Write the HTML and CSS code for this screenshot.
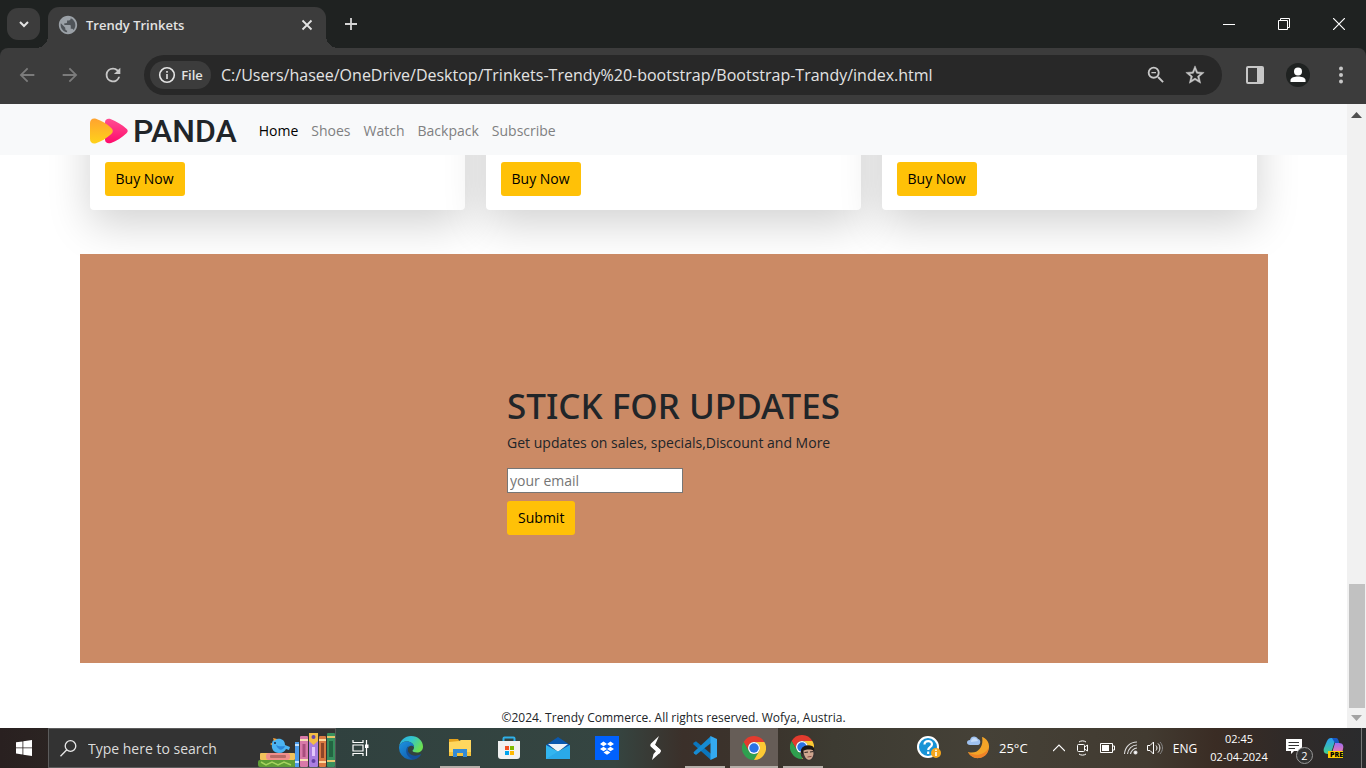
FILE: index.html
```html
<!DOCTYPE html>
<html lang="en">
<head>
<meta charset="utf-8">
<title>Trendy Trinkets</title>
<link rel="stylesheet" href="styles.css">
</head>
<body>
<header class="tabstrip">
  <button class="tab-search" aria-label="Search tabs"><svg width="12" height="12" viewBox="0 0 12 12"><path d="M2 4l4 4 4-4" fill="none" stroke="#e3e3e3" stroke-width="2"/></svg></button>
  <div class="tab">
    <svg width="22" height="22" viewBox="0 0 24 24"><circle cx="12" cy="12" r="9" fill="#4f5459"/><path fill="#9aa0a6" d="M12 2C6.480 2 2 6.480 2 12s4.480 10 10 10 10-4.480 10-10S17.520 2 12 2zm-1 17.930c-3.950-.490-7-3.850-7-7.930 0-.620.080-1.210.210-1.790L9 15v1c0 1.100.900 2 2 2v1.930zm6.900-2.540c-.260-.810-1-1.390-1.900-1.390h-1v-3c0-.550-.450-1-1-1H8v-2h2c.550 0 1-.450 1-1V7h2c1.100 0 2-.900 2-2v-.410c2.930 1.190 5 4.060 5 7.410 0 2.080-.800 3.970-2.100 5.390z"/></svg>
    <span class="tab-title">Trendy Trinkets</span>
    <button class="tab-close" aria-label="Close tab"><svg width="12" height="12" viewBox="0 0 12 12"><path d="M1.500 1.500l9 9m0-9l-9 9" stroke="#e3e3e3" stroke-width="1.800"/></svg></button>
  </div>
  <button class="new-tab" aria-label="New tab"><svg width="14" height="14" viewBox="0 0 14 14"><path d="M7 1v12M1 7h12" stroke="#d5d5d5" stroke-width="1.800"/></svg></button>
  <div class="window-controls">
    <button aria-label="Minimize"><svg width="12" height="12" viewBox="0 0 12 12"><path d="M0 6.500h12" stroke="#fff"/></svg></button>
    <button aria-label="Restore"><svg width="12" height="12" viewBox="0 0 12 12" fill="none" stroke="#fff"><path d="M.5 2.500h9v9h-9zM2.500 2.500v-2h9v9h-2"/></svg></button>
    <button aria-label="Close"><svg width="12" height="12" viewBox="0 0 12 12"><path d="M0 0l12 12M12 0L0 12" stroke="#fff" stroke-width="1.200"/></svg></button>
  </div>
</header>

<div class="toolbar">
  <div class="nav-buttons">
    <button aria-label="Back"><svg width="22" height="22" viewBox="0 0 24 24"><path fill="#7b7b7b" d="M20 11H7.830l5.590-5.590L12 4l-8 8 8 8 1.410-1.410L7.830 13H20v-2z"/></svg></button>
    <button aria-label="Forward"><svg width="22" height="22" viewBox="0 0 24 24"><path fill="#7b7b7b" d="M12 4l-1.410 1.410L16.170 11H4v2h12.170l-5.580 5.590L12 20l8-8z"/></svg></button>
    <button aria-label="Reload"><svg width="22" height="22" viewBox="0 0 24 24"><path fill="#c7c7c7" d="M17.650 6.350A7.960 7.960 0 0 0 12 4a8 8 0 1 0 7.730 10h-2.080A6 6 0 1 1 12 6c1.660 0 3.140.690 4.220 1.780L13 11h7V4l-2.350 2.350z"/></svg></button>
  </div>
  <div class="omnibox">
    <button class="file-chip"><svg width="18" height="18" viewBox="0 0 18 18"><circle cx="9" cy="9" r="7.300" fill="none" stroke="#e3e3e3" stroke-width="1.600"/><path d="M9 8v5M9 5v1.800" stroke="#e3e3e3" stroke-width="1.600"/></svg>File</button>
    <input class="url" aria-label="Address" value="C:/Users/hasee/OneDrive/Desktop/Trinkets-Trendy%20-bootstrap/Bootstrap-Trandy/index.html">
    <button class="omni-action" aria-label="Zoom"><svg width="22" height="22" viewBox="0 0 24 24"><path fill="#c7c7c7" d="M15.500 14h-.790l-.280-.270A6.470 6.470 0 0 0 16 9.500 6.500 6.500 0 1 0 9.500 16c1.610 0 3.090-.590 4.230-1.570l.270.280v.790l5 4.990L20.490 19l-4.990-5zm-6 0C7.010 14 5 11.990 5 9.500S7.010 5 9.500 5 14 7.010 14 9.500 11.990 14 9.500 14zM7 8.800h5v1.400H7z"/></svg></button>
    <button class="omni-action" aria-label="Bookmark"><svg width="22" height="22" viewBox="0 0 24 24"><path fill="#c7c7c7" stroke="#c7c7c7" stroke-width=".5" d="M22 9.240l-7.190-.620L12 2 9.190 8.630 2 9.240l5.460 4.730L5.820 21 12 17.270 18.180 21l-1.630-7.030L22 9.240zM12 15.400l-3.760 2.270 1-4.280-3.320-2.880 4.380-.380L12 6.100l1.710 4.040 4.380.380-3.320 2.880 1 4.280L12 15.400z"/></svg></button>
  </div>
  <div class="toolbar-actions">
    <button aria-label="Side panel"><svg width="18" height="18" viewBox="0 0 18 18"><path fill="#c7c7c7" fill-rule="evenodd" d="M2 0h14a2 2 0 0 1 2 2v14a2 2 0 0 1-2 2H2a2 2 0 0 1-2-2V2a2 2 0 0 1 2-2zm0 2v14h9V2z"/></svg></button>
    <button aria-label="Profile"><svg width="24" height="24" viewBox="0 0 24 24"><circle cx="12" cy="12" r="12" fill="#1f2221"/><circle cx="12" cy="8.500" r="4" fill="#fff"/><path fill="#fff" d="M4.500 19v-2c0-2.500 4.500-3.500 7.500-3.500s7.500 1 7.500 3.500v2z"/></svg></button>
    <button aria-label="Menu"><svg width="6" height="18" viewBox="0 0 6 18" fill="#c7c7c7"><circle cx="3" cy="2.500" r="2"/><circle cx="3" cy="9" r="2"/><circle cx="3" cy="15.500" r="2"/></svg></button>
  </div>
</div>

<div class="viewport">
  <main class="page">
    <nav class="navbar">
      <a class="brand" href="#home">
        <svg width="38" height="26" viewBox="0 0 38 26">
          <defs>
            <linearGradient id="orange" x1="0" y1="0" x2="0" y2="1"><stop offset="0" stop-color="#ffa32f"/><stop offset="1" stop-color="#ffd21a"/></linearGradient>
            <linearGradient id="pink" x1="0" y1="0" x2="0" y2="1"><stop offset="0" stop-color="#ff4f93"/><stop offset="1" stop-color="#ff0a6c"/></linearGradient>
          </defs>
          <path fill="url(#pink)" d="M15 4.500C15 1 18 .100 21 1.200c5 1.800 11 5.500 15.500 9.600 1.600 1.500 1.600 3 0 4.400C32 19.500 26.500 23 21 24.900c-3 1-6 0-6-3.400z"/>
          <path fill="url(#orange)" d="M0 5C0 1.500 2.800-.300 6 .800 11.500 2.800 17 6 21.300 10c2 1.900 2 4 0 6C17 20 11.500 23.300 6 25.200c-3.200 1.100-6-.700-6-4.200z"/>
        </svg>
        <span>PANDA</span>
      </a>
      <a class="nav-link active" href="#home">Home</a>
      <a class="nav-link" href="#shoes">Shoes</a>
      <a class="nav-link" href="#watch">Watch</a>
      <a class="nav-link" href="#backpack">Backpack</a>
      <a class="nav-link" href="#subscribe">Subscribe</a>
    </nav>
    <section class="container products">
      <article class="card"><button class="btn">Buy Now</button></article>
      <article class="card"><button class="btn">Buy Now</button></article>
      <article class="card"><button class="btn">Buy Now</button></article>
    </section>
    <section class="container subscribe" id="subscribe">
      <form class="subscribe-form">
        <h1>STICK FOR UPDATES</h1>
        <p>Get updates on sales, specials,Discount and More</p>
        <input type="email" placeholder="your email" aria-label="your email">
        <button class="btn" type="button">Submit</button>
      </form>
    </section>
    <footer class="footer">©2024. Trendy Commerce. All rights reserved. Wofya, Austria.</footer>
  </main>
  <div class="scrollbar">
    <svg width="11" height="6" viewBox="0 0 11 6"><path d="M5.500 0L11 6H0z" fill="#505050"/></svg>
    <div class="thumb"></div>
    <svg width="11" height="6" viewBox="0 0 11 6"><path d="M5.500 6L0 0h11z" fill="#a3a3a3"/></svg>
  </div>
</div>

<footer class="taskbar">
  <button class="start" aria-label="Start"><svg width="16" height="16" viewBox="0 0 16 16" fill="#fff"><path d="M0 2.300l6.500-.9v6.100H0zM7.300 1.300L16 0v7.500H7.300zM0 8.300h6.500v6.200L0 13.600zM7.300 8.300H16V16l-8.700-1.300z"/></svg></button>
  <label class="search">
    <svg width="17" height="17" viewBox="0 0 17 17" fill="none" stroke="#e8e8e8" stroke-width="1.300"><circle cx="10.500" cy="6" r="5.300"/><path d="M6.800 9.800L.5 16.300"/></svg>
    <input type="text" placeholder="Type here to search">
    <svg width="77" height="34" viewBox="0 0 77 34">
      <rect x="0" y="27" width="38" height="7" rx="2" fill="#5e9d35"/><path d="M3 29l5 3 6-3 6 3 6-3 7 3" stroke="#a5d35f" stroke-width="1.500" fill="none"/>
      <rect x="2" y="20" width="35" height="7" rx="1" fill="#f2c25a"/><rect x="8" y="20" width="24" height="7" rx="3" fill="#f08f8b"/><rect x="12" y="22" width="16" height="3" rx="1" fill="#b96a65"/>
      <path d="M14 11c-1 5 2 9 7 9 4 0 6-2 7-4l3 1 1-3-5-2c0-5-4-7-8-6-3 0-5 2-5 5z" fill="#4bb4f2"/><path d="M18 12c3 2 6 1 9 1-1 4-6 6-9-1z" fill="#2b86d8"/><path d="M14 10l-2 1 2 1M15 5l1 3 3-2z" fill="#f6a23c"/><circle cx="17" cy="10" r="1" fill="#124"/>
      <rect x="37" y="9" width="4" height="25" fill="#4b9bea"/><path d="M37 12h4M37 29h4" stroke="#c2e2ff" stroke-width="2"/>
      <rect x="42" y="3" width="8" height="31" rx="1" fill="#d879a8"/><path d="M42 7h8M42 27h8" stroke="#f7dfb5" stroke-width="2"/><path d="M46 11v13" stroke="#a94e7e" stroke-width="3"/>
      <rect x="51" y="0" width="9" height="34" rx="1" fill="#aa7ee0"/><path d="M51 0h9v8l-4.500 4L51 8z" fill="#f3bd45"/><circle cx="55.500" cy="4" r="2" fill="#6949aa"/><path d="M55.500 14v9" stroke="#e3c7fa" stroke-width="3"/><circle cx="55.500" cy="28" r="2" fill="#6440a4"/>
      <rect x="61" y="3" width="7" height="31" rx="1" fill="#d97a42"/><path d="M61 7h7M61 29h7" stroke="#ffd79a" stroke-width="2"/><path d="M64.500 10v15" stroke="#8d4629" stroke-width="3"/>
      <rect x="69" y="0" width="8" height="34" rx="1" fill="#388f5d"/><path d="M69 4h8M69 28h8" stroke="#e4c46b" stroke-width="2"/><path d="M73 8v16" stroke="#236442" stroke-width="4"/>
    </svg>
  </label>
  <div class="apps">
    <button class="app task-view" aria-label="Task view"><svg width="17" height="16" viewBox="0 0 17 16" fill="none" stroke="#fff" stroke-width="1.200"><path d="M1 5h10v6H1zM1 0v2.500h10V0M1 16v-2.500h10V16M14.500 0v16"/><path fill="#fff" stroke="none" d="M13 4.500h3.500v3.500H13z"/></svg></button>
    <button class="app" aria-label="Edge"><svg width="24" height="24" viewBox="0 0 24 24">
      <defs><linearGradient id="edgeTop" x1="0" y1="0" x2="1" y2=".5"><stop offset="0" stop-color="#2aa9e0"/><stop offset=".5" stop-color="#32c5cf"/><stop offset="1" stop-color="#6be052"/></linearGradient><linearGradient id="edgeLow" x1="0" y1="0" x2="1" y2="1"><stop offset="0" stop-color="#1c93e0"/><stop offset="1" stop-color="#0f4fa0"/></linearGradient></defs>
      <path fill="url(#edgeTop)" d="M0 11C1 4 6 0 12 0c7 0 12 5 12 10.500 0 4-3 6-6 6-2.500 0-4.500-.7-4.500-1.700 0-1 1.500-1 1.500-3.300C15 8 12 5.500 8 5.500c-4 0-7 2-8 5.500z"/>
      <path fill="url(#edgeLow)" d="M0 12C0 8 3.500 5.500 8 5.500c4 0 7 2.500 7 5.500-1.500-2-6-2-6.500 2.500-.4 4.500 4 7.500 9 6.500 2-.4 3-1 4.700-2A12 12 0 0 1 0 12z"/>
      <path fill="#144f98" d="M10.500 9.200C6.500 11 6 17.500 10 21c1.500 1.400 3.500 2.200 5.500 2.600 3-.8 5.300-2.800 6.700-5.300-6.500 3.200-13 .5-13.500-4.300-.2-2 .5-4 1.800-4.800z"/>
    </svg></button>
    <button class="app open" aria-label="File Explorer"><svg width="22" height="20" viewBox="0 0 22 20"><path fill="#e5a21c" d="M0 1h9l2 3H0z"/><path fill="#ffd75e" d="M0 4l10-1 2-1h10v16H0z"/><path fill="#f5c33b" d="M0 14h22v4H0z"/><path fill="#348bd4" d="M4 19v-8h14v8h-4v-4H8v4z"/></svg></button>
    <button class="app" aria-label="Store"><svg width="24" height="24" viewBox="0 0 24 24"><path d="M6.500 6V2.500a1 1 0 0 1 1-1h9a1 1 0 0 1 1 1V6" fill="none" stroke="#2fb0e8" stroke-width="2"/><path fill="#f1f1f1" d="M1 5h22v15a3 3 0 0 1-3 3H4a3 3 0 0 1-3-3z"/><path fill="#f25022" d="M8 10h4v4H8z"/><path fill="#7fba00" d="M13 10h4v4h-4z"/><path fill="#00a4ef" d="M8 15h4v4H8z"/><path fill="#ffb900" d="M13 15h4v4h-4z"/></svg></button>
    <button class="app" aria-label="Mail"><svg width="24" height="24" viewBox="0 0 24 24"><path fill="#0b58ad" d="M12 1l12 8v3H0V9z"/><path fill="#eef3f8" d="M2 8h20L12 16z"/><path fill="#32b5ef" d="M0 9l12 6.500L24 9v14H0z"/><path fill="#1d91dc" d="M24 9v14H0l12-7.500z" opacity=".35"/></svg></button>
    <button class="app" aria-label="Dropbox"><svg width="24" height="24" viewBox="0 0 24 24"><path fill="#0061fe" d="M0 0h24v24H0z"/><path fill="#fff" d="M8.500 5.500L12 8 8.500 10.300 5 8zM15.500 5.500L19 8l-3.500 2.300L12 8zM8.500 10.700L12 13l-3.500 2.300L5 13zM15.500 10.700L19 13l-3.500 2.300L12 13zM12 14.200l3.500 2.300-3.500 2.300-3.500-2.300z"/></svg></button>
    <button class="app" aria-label="S app"><svg width="14" height="24" viewBox="0 0 14 24" fill="#fff"><path d="M10 0L2 7.500c-1 1.300-1 2.500.2 3.500L10 18l1.200-1.700c.8-1 .8-2 0-2.800L6 9z"/><path d="M4 7l7 6.500c1 1 .8 2.300 0 3.200L3 24l1.500-6L8 14 2 9z"/></svg></button>
    <button class="app open" aria-label="Visual Studio Code"><svg width="24" height="24" viewBox="0 0 24 24"><path fill="#0b76bd" d="M1 6.500l2-1.200 15 12.500V24L0 8z"/><path fill="#168bd2" d="M18 0v7L3 19l-2-1.400-.5-1.300z"/><path fill="#34a9ef" d="M17.500 0L24 3v18l-6.500 3z"/></svg></button>
    <button class="app open current" aria-label="Chrome"><svg width="24" height="24" viewBox="0 0 48 48"><g id="chromeLogo"><path fill="#e33b2e" d="M3.210 12A24 24 0 0 1 44.790 12H24A12 12 0 0 0 13.610 30z"/><path fill="#2fa04f" d="M3.210 12L13.610 30A12 12 0 0 0 34.390 30L24 48A24 24 0 0 1 3.210 12z"/><path fill="#fcc934" d="M44.790 12A24 24 0 0 1 24 48L34.390 30A12 12 0 0 0 24 12z"/><circle cx="24" cy="24" r="12" fill="#fff"/><circle cx="24" cy="24" r="9.500" fill="#2a72e5"/></g></svg></button>
    <button class="app open" aria-label="Chrome profile"><svg width="26" height="26" viewBox="0 0 26 26"><svg width="24" height="24" viewBox="0 0 48 48"><use href="#chromeLogo"/></svg><circle cx="18" cy="18" r="7.500" fill="#393432"/><path fill="#cfa68f" d="M13 15c2-2 8-3 10-1l.5 5c-.5 3-2 5.500-4 5.800-3 .2-5.500-3-6.500-9.800z"/><path fill="#1c1715" d="M11 17c-.5-6 5-7 9-6.500 3 .3 5 2.500 4 5.500-3-2.500-8-1.500-10.500-.5l-.5 4z"/><path d="M14.500 17.500l3.500-.5m2 0l3.500-.5" stroke="#332824" stroke-width="1.200"/><path d="M17.500 22l4-.6" stroke="#854a43"/></svg></button>
  </div>
  <div class="tray">
    <button class="tray-icon" aria-label="Help"><svg width="24" height="24" viewBox="0 0 24 24"><circle cx="11" cy="11" r="10" fill="#1793d6" stroke="#fff" stroke-width="2"/><path d="M7.500 8.500c0-4.500 7.500-4.500 7.500-.3 0 3-3.800 2.800-3.800 5.800M11.200 15.500V18" fill="none" stroke="#fff" stroke-width="2.200"/><circle cx="19" cy="17" r="5" fill="#f6a71d"/><path d="M19 16v4M19 13.500V15" stroke="#fff" stroke-width="1.600"/></svg></button>
    <button class="weather"><svg width="24" height="24" viewBox="0 0 24 24"><path d="M16 1c7 2 9 10 5 16-5 7-15 7-19-1 10 3 16-6 14-15z" fill="#f4a528"/><path d="M22.500 12c0 11-15 14-20.500 4 7 5 17 3 20.500-4z" fill="#ee8328"/><path fill="#9fc1ee" d="M4 9C0 9 0 4 4 4c1-5 7-4 8-1 3 0 3 6 0 6z"/><path fill="#c6dcf8" d="M5 6c0-5 6-5 7-1z"/></svg><span>25°C</span></button>
    <button class="tray-icon" aria-label="Hidden icons"><svg width="12" height="8" viewBox="0 0 12 8"><path d="M0 7l6-6 6 6" fill="none" stroke="#fff" stroke-width="1.200"/></svg></button>
    <button class="tray-icon" aria-label="Meet now"><svg width="14" height="16" viewBox="0 0 14 16" fill="none" stroke="#fff"><rect x="1.500" y="4.500" width="7" height="7" rx="1"/><path d="M8.500 7l3-2v6l-3-2M3 2c2-1.500 5-1.500 7 0M3 14c2 1.500 5 1.500 7 0"/></svg></button>
    <button class="tray-icon" aria-label="Battery"><svg width="15" height="10" viewBox="0 0 15 10"><path d="M.5.5h12v9H.500zM13 3h1.500v4H13" fill="none" stroke="#fff"/><path fill="#fff" d="M2 2h7v6H2z"/></svg></button>
    <button class="tray-icon" aria-label="Wi-Fi"><svg width="14" height="14" viewBox="0 0 14 14" fill="none" stroke="#ddd" stroke-width="1.100"><path d="M.5 13C1 6 6 1 13 1M3.500 13C4 8 8 4 13 4M6.500 13C7 10 10 7 13 7"/><circle cx="11.500" cy="11.500" r="1.500" fill="#fff"/></svg></button>
    <button class="tray-icon" aria-label="Volume"><svg width="16" height="14" viewBox="0 0 16 14" fill="none" stroke="#fff"><path d="M.5 4.500h2.500l3.500-3.500v12L3 9.500H.500zM9 4.500c1.300 1.500 1.300 3.500 0 5M11 2.500c2.500 2.500 2.500 6.500 0 9"/><path d="M13 1c3.300 3.500 3.300 8.500 0 12" stroke="#888"/></svg></button>
    <button class="language">ENG</button>
    <button class="clock"><span>02:45</span><span>02-04-2024</span></button>
    <button class="notify" aria-label="Notifications"><svg width="24" height="24" viewBox="0 0 24 24"><path fill="#fff" d="M1 3h16v12H9l-3 3v-3H1z"/><path d="M3.500 6.500H14M3.500 9.500H14M3.500 12.500H10" stroke="#333"/></svg><span class="badge">2</span></button>
    <button class="copilot" aria-label="Copilot"><svg width="22" height="20" viewBox="0 0 22 20"><defs><linearGradient id="copilotLeft" x1="0" y1="0" x2="0" y2="1"><stop offset="0" stop-color="#2a9df4"/><stop offset="1" stop-color="#43d18b"/></linearGradient><linearGradient id="copilotRight" x1="0" y1="0" x2="0" y2="1"><stop offset="0" stop-color="#9b6cf0"/><stop offset="1" stop-color="#f57aa7"/></linearGradient></defs><path fill="url(#copilotLeft)" d="M4 3c1-2 2-3 4-3h5L9 12c-1 3-2 4-4 4C1 16 0 13 1 10z"/><path fill="#1757c5" d="M9 0h4c2 0 2.500 2 3.200 5H12z"/><path fill="url(#copilotRight)" d="M12 5h4c4 0 5 3 4 6l-1 4H9z"/><path fill="#fc0" d="M5 13h15v7H5z"/></svg><span class="pre">PRE</span></button>
    <button class="show-desktop" aria-label="Show desktop"></button>
  </div>
</footer>
</body>
</html>
```
FILE: styles.css
```css
* { box-sizing: border-box; }
body {
  margin: 0;
  height: 100vh;
  display: flex;
  flex-direction: column;
  overflow: hidden;
  font-family: "Open Sans", "Noto Sans", sans-serif;
  background: #1f2221;
}
button, input { font: inherit; color: inherit; }
button { border: 0; padding: 0; background: none; display: flex; align-items: center; justify-content: center; flex: none; }
svg { display: block; flex: none; }
a { text-decoration: none; }

/* Browser tabs */
.tabstrip { flex: none; height: 48px; display: flex; padding-left: 7px; }
.tab-search { width: 33px; height: 32px; margin: 8px 8px 0 0; border-radius: 11px; background: #3c3c3c; }
.tab {
  position: relative;
  width: 278px;
  height: 41px;
  margin-top: 7px;
  padding: 0 13px 6px 9px;
  display: flex;
  align-items: center;
  gap: 7px;
  border-radius: 11px 11px 0 0;
  background: #3c3c3c;
}
.tab::before, .tab::after { content: ""; position: absolute; bottom: 0; width: 12px; height: 12px; }
.tab::before { left: -12px; background: radial-gradient(circle at 0 0, transparent 12px, #3c3c3c 12px); }
.tab::after { right: -12px; background: radial-gradient(circle at 100% 0, transparent 12px, #3c3c3c 12px); }
.tab-title { flex: 1; color: #e3e3e3; font-size: 13px; font-weight: 600; }
.new-tab { width: 32px; height: 32px; margin: 8px 0 0 9px; }
.window-controls { margin-left: auto; display: flex; }
.window-controls button { width: 55px; height: 48px; }

/* Browser toolbar */
.toolbar { flex: none; height: 56px; display: flex; align-items: center; background: #3c3c3c; border-radius: 8px 8px 0 0; padding: 0 4px 2px 5px; }
.nav-buttons { display: flex; margin-right: 10px; }
.nav-buttons button { width: 43px; height: 40px; }
.omnibox { flex: 1; height: 40px; display: flex; align-items: center; padding: 0 8px 0 6px; border-radius: 20px; background: #282828; }
.file-chip { width: 61px; height: 28px; gap: 5px; border-radius: 14px; background: #3c3c3c; color: #e3e3e3; font-size: 13px; font-weight: 600; }
.url { flex: 1; min-width: 0; border: 0; outline: 0; padding: 0 0 0 10px; background: none; color: #e3e3e3; font-size: 16px; }
.omni-action { width: 39px; height: 40px; }
.toolbar-actions { display: flex; padding-left: 11px; }
.toolbar-actions button { width: 43px; height: 40px; }

/* Page */
.viewport { flex: 1; min-height: 0; display: flex; background: #fff; }
.page { flex: 1; min-width: 0; overflow: hidden; color: #212529; font-size: 14px; line-height: 22px; }
.navbar { position: relative; z-index: 1; height: 51px; display: flex; align-items: center; gap: 13px; padding: 2px 90px 0; background: #f8f9fa; }
.brand { display: flex; align-items: center; gap: 5px; margin-right: 9px; color: #212529; font: 500 32px/36px Roboto, sans-serif; }
.nav-link { color: #7f8081; }
.nav-link.active { color: #000; }
.container { max-width: 1188px; margin: 0 auto; }
.products { display: grid; grid-template-columns: repeat(3, 1fr); gap: 21px; margin-top: -200px; padding: 0 11px 0 10px; }
.card { display: flex; align-items: flex-end; height: 255px; padding: 14px 15px; border-radius: 4px; background: #fff; box-shadow: 0 14px 43px rgba(0, 0, 0, .18); }
.btn { height: 34px; padding: 0 11px; border-radius: 3px; background: #ffc107; color: #000; }
.subscribe { position: relative; display: flex; align-items: center; justify-content: center; margin-top: 44px; padding: 128px 0; background: #cb8a65; }
.subscribe-form { display: flex; flex-direction: column; align-items: flex-start; }
.subscribe-form h1 { margin: 0; padding: 2px 0 5px; font-family: "Noto Sans", "Open Sans", sans-serif; font-size: 35px; line-height: 43px; font-weight: 500; }
.subscribe-form p { margin: 0 0 14px; }
.subscribe-form input { width: 176px; height: 25px; margin-bottom: 8px; padding: 1px 2px; border: 1px solid #767676; background: #fff; }
.subscribe-form input::placeholder { color: #757575; }
.footer { margin-top: 44px; text-align: center; font-size: 12px; }
.scrollbar { width: 19px; display: flex; flex-direction: column; align-items: center; padding: 8px 0 7px; background: #f1f1f1; }
.thumb { width: 16px; height: 124px; margin: auto 0 7px; background: #c1c1c1; }

/* Taskbar */
.taskbar { flex: none; height: 40px; display: flex; color: #fff; background: linear-gradient(90deg, #292020 0, #2b2422 4%, #30413f 24%, #354541 45%, #3b302a 50%, #3b352d 57%, #3d3b32 61%, #454137 72%, #423b31 84%, #3a2c24 89%, #302a28 94%, #2a2b2d 100%); }
.start { width: 48px; }
.search { width: 288px; display: flex; align-items: center; padding-left: 11px; border: 1px solid #5c5c5c; border-right-color: #555; background: #333; }
.search input { flex: 1; min-width: 0; border: 0; outline: 0; background: none; padding: 0 0 0 11px; font-size: 14px; }
.search input::placeholder { color: #dcdcdc; }
.search svg:last-child { align-self: flex-end; }
.apps { display: flex; gap: 1px; }
.app { width: 48px; position: relative; }
.task-view { width: 50px; padding-right: 2px; }
.open::after { content: ""; position: absolute; left: 4px; right: 4px; bottom: 0; height: 2px; background: #b5afa9; }
.current { background: #665d57; }
.current::after { left: 0; right: 0; }
.tray { margin-left: auto; display: flex; font-size: 12px; }
.tray-icon { width: 24px; }
.weather { width: 81px; margin-left: 25px; justify-content: flex-start; gap: 9px; font-size: 13px; }
.language { width: 36px; }
.clock { width: 72px; flex-direction: column; font-size: 11px; line-height: 18px; }
.notify { width: 44px; position: relative; }
.badge { position: absolute; right: 6px; bottom: 4px; width: 17px; height: 17px; border: 1px solid #999; border-radius: 50%; background: #333; font-size: 11px; line-height: 15px; }
.copilot { width: 30px; margin-right: 12px; position: relative; }
.pre { position: absolute; right: 6px; bottom: 10px; color: #000; font-size: 7px; line-height: 7px; font-weight: 800; }
.show-desktop { width: 5px; border-left: 1px solid #777; }
```
